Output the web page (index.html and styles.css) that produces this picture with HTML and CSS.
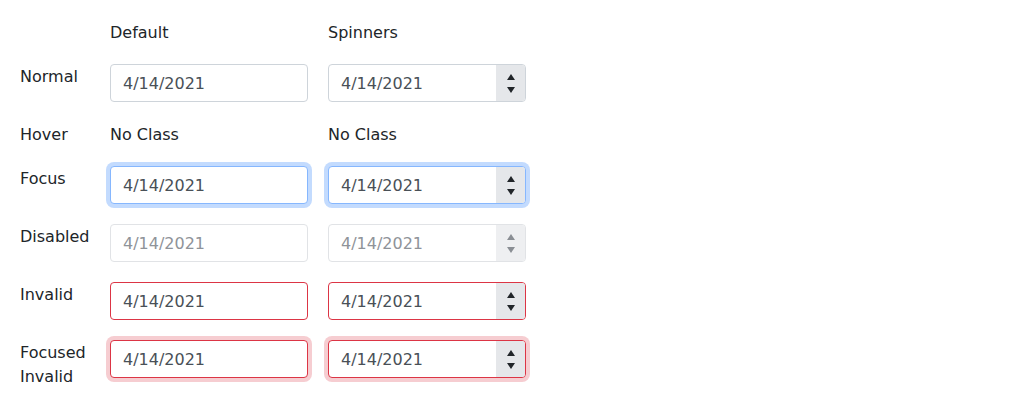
FILE: index.html
```html
<!DOCTYPE html>
<html>
<head>
<meta charset="utf-8">
<link rel="stylesheet" href="styles.css">
</head>
<body>
<div class="grid">
  <div class="lbl"></div>
  <div class="hd">Default</div>
  <div class="hd">Spinners</div>

  <div class="lbl">Normal</div>
  <div class="input">4/14/2021</div>
  <div class="input spin"><span class="val">4/14/2021</span><span class="btns"><i class="up"></i><i class="dn"></i></span></div>

  <div class="lbl">Hover</div>
  <div class="hd">No Class</div>
  <div class="hd">No Class</div>

  <div class="lbl">Focus</div>
  <div class="input focus">4/14/2021</div>
  <div class="input spin focus"><span class="val">4/14/2021</span><span class="btns"><i class="up"></i><i class="dn"></i></span></div>

  <div class="lbl">Disabled</div>
  <div class="input disabled">4/14/2021</div>
  <div class="input spin disabled"><span class="val">4/14/2021</span><span class="btns"><i class="up"></i><i class="dn"></i></span></div>

  <div class="lbl">Invalid</div>
  <div class="input invalid">4/14/2021</div>
  <div class="input spin invalid"><span class="val">4/14/2021</span><span class="btns"><i class="up"></i><i class="dn"></i></span></div>

  <div class="lbl">Focused Invalid</div>
  <div class="input invalid focus-invalid">4/14/2021</div>
  <div class="input spin invalid focus-invalid"><span class="val">4/14/2021</span><span class="btns"><i class="up"></i><i class="dn"></i></span></div>
</div>
</body>
</html>
```
FILE: styles.css
```css
html, body {
  margin: 0;
  padding: 0;
  background: #fff;
}
body {
  font-family: "DejaVu Sans", sans-serif;
  font-size: 16px;
  line-height: 24px;
  color: #212529;
}
.grid {
  display: grid;
  grid-template-columns: 70px 198px 198px;
  column-gap: 20px;
  row-gap: 20px;
  padding: 20px;
  align-items: start;
}
.lbl, .hd {
  line-height: 24px;
  padding-top: 1px;
  margin-bottom: -1px;
}
.input {
  box-sizing: border-box;
  height: 38px;
  border: 1px solid #ced4da;
  border-radius: 4px;
  padding: 7px 12px 5px;
  color: #495057;
  background: #fff;
  line-height: 24px;
  display: flex;
  align-items: center;
}
.spin {
  padding-right: 0;
  overflow: hidden;
}
.spin .val {
  flex: 1;
}
.btns {
  width: 29px;
  align-self: stretch;
  margin: -7px 0 -5px;
  background: #e5e7ea;
  display: flex;
  flex-direction: column;
  align-items: center;
  justify-content: center;
  gap: 7px;
}
.btns i {
  display: block;
  width: 0;
  height: 0;
  border-left: 4px solid transparent;
  border-right: 4px solid transparent;
}
.btns .up { border-bottom: 6px solid #212529; }
.btns .dn { border-top: 6px solid #212529; }
.focus {
  border-color: #86b7fe;
  box-shadow: 0 0 0 4px #c3dbfe;
}
.disabled {
  border-color: #e1e3e6;
  color: #8f9399;
}
.disabled .btns { background: #eeeff1; }
.disabled .btns .up { border-bottom-color: #8a8e94; }
.disabled .btns .dn { border-top-color: #8a8e94; }
.invalid {
  border-color: #dc3545;
}
.focus-invalid {
  box-shadow: 0 0 0 4px #f6cdd1;
}
```
